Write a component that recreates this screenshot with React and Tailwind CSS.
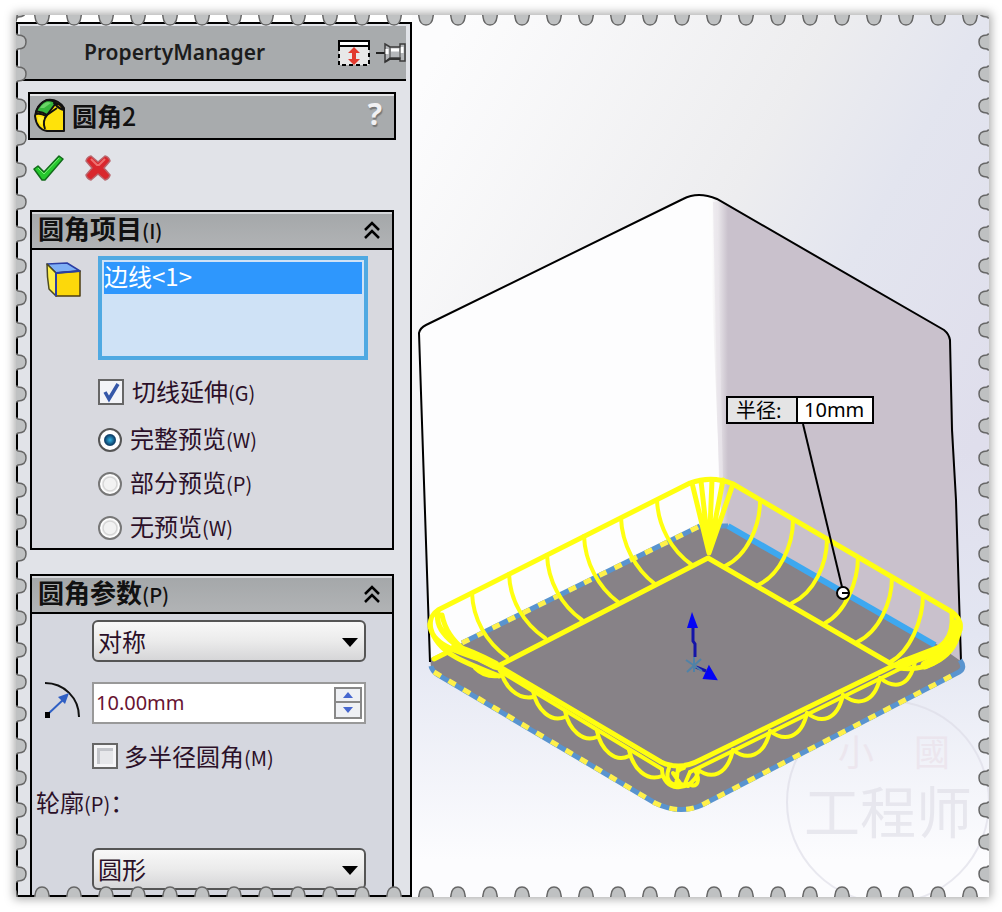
import React, { useState } from "react";

const FilletIcon = () => (
  <svg className="w-8 h-9 shrink-0" viewBox="0 0 32 36" strokeLinejoin="round">
    <path d="M1 18C2 11 6 5 13 2C20 1 26 4 30 10V33H13C7 32 2 27 1 18Z" fill="#ffe20a" stroke="#111" strokeWidth="2" />
    <path d="M2 14C4 8 8 4 13 2C17 2 20 3 22 5L13 17C9 14 6 13 2 14Z" fill="#35b63b" stroke="#111" strokeWidth="2" />
    <path d="M6 10Q9 5 14 4L17 5L10 10Z" fill="#6bd468" />
    <path d="M20 5Q26 5 30 12Q25 11 20 5Z" fill="#ffc81c" stroke="#111" strokeWidth="2" />
    <path d="M13 17L23 10M13 17Q8 23 11 31M2 16Q7 15 12 18" fill="none" stroke="#111" strokeWidth="2" />
    <path d="M4 19Q8 18 10 20Q8 24 8 27Q4 24 4 19Z" fill="#fff03a" />
  </svg>
);

const CubeIcon = () => (
  <svg className="w-9 h-9" viewBox="0 0 36 36" strokeLinejoin="round" strokeWidth="1.5">
    <path d="M1 2L21 1L34 9L10 11Z" fill="#7fb0f5" stroke="#2b3fa5" />
    <path d="M1 2L10 11V34L3 27Q1 15 1 2Z" fill="#fff04a" stroke="#4d4a20" />
    <path d="M10 11L34 9V34H10Z" fill="#fcd80b" stroke="#4b3d12" />
    <path d="M10 34V11L34 9" fill="none" stroke="#2b3fa5" strokeWidth="2" />
  </svg>
);

const RadiusIcon = () => (
  <svg className="w-9 h-9" viewBox="0 0 36 36" fill="none">
    <path d="M1 1C20 1 35 16 35 35" stroke="#111" strokeWidth="2" />
    <path d="M4 32L20 17" stroke="#2f5fc4" strokeWidth="2" />
    <path d="M25 11L21 22L14 15Z" fill="#2f5fc4" />
    <path d="M1 30H6V36H1Z" fill="#000" />
  </svg>
);

const SectionHeader = ({ title, hotkey }) => (
  <button
    type="button"
    className="flex w-full h-[38px] items-center justify-between border-b-2 border-black bg-gradient-to-b from-[#a4a7a9] to-[#b1b3b5] pl-1.5 pr-3 text-left shadow-[inset_0_2px_0_#d5d7da]"
  >
    <span className="pb-1 text-[26px] leading-8 font-bold text-[#111]">
      {title}
      <span className="text-xl font-medium">({hotkey})</span>
    </span>
    <svg className="w-4 h-5" viewBox="0 0 16 20" fill="none" stroke="#000" strokeWidth="2.5">
      <path d="M1 10L8 3L15 10M1 18L8 11L15 18" />
    </svg>
  </button>
);

const RadioRow = ({ label, hotkey, checked, onChange }) => (
  <label className="mt-3 flex h-8 items-center gap-2 text-2xl text-[#2b1028]">
    <input
      type="radio"
      name="preview"
      checked={checked}
      onChange={onChange}
      className="appearance-none w-6 h-6 rounded-full border-2 border-[#777] bg-[radial-gradient(circle,#f2f2f2_40%,#d2d2d2_48%,#fff_62%)] checked:border-[#555] checked:bg-[radial-gradient(circle,#35b5e5_0%,#0c3c66_38%,#fff_46%)]"
    />
    <span className="pb-1">
      {label}
      <span className="text-xl">({hotkey})</span>
    </span>
  </label>
);

const DropDown = ({ name, options }) => (
  <div className="relative ml-[60px] mr-[26px]">
    <select
      aria-label={name}
      className="block w-full h-[42px] appearance-none rounded-md border-2 border-[#555] bg-gradient-to-b from-[#f8f8f8] via-[#ebebeb] to-[#d6d6d8] pl-1 text-2xl text-[#2b1028]"
    >
      {options.map((option) => (
        <option key={option}>{option}</option>
      ))}
    </select>
    <svg className="pointer-events-none absolute right-2 top-4 w-4 h-3" viewBox="0 0 16 12">
      <path d="M0 2H16L8 11Z" fill="#000" />
    </svg>
  </div>
);

const PropertyPanel = () => {
  const [preview, setPreview] = useState("full");

  return (
    <aside className="mt-[7px] w-[396px] shrink-0 overflow-hidden border-2 border-black bg-[#e1e3e8]">
      <header className="mt-0.5 ml-0.5 mr-1 flex h-[55px] items-center border-b-2 border-black bg-[#a8abad] pl-16">
        <h1 className="flex-1 font-['Noto_Sans'] text-[21px] font-semibold text-[#1c1c1c]">
          PropertyManager
        </h1>
        <button type="button" aria-label="Expand" className="mr-1.5">
          <svg className="w-8 h-7" viewBox="0 0 32 28">
            <path d="M1 8V26H31V8" fill="#e8e8e8" stroke="#000" strokeWidth="2" strokeDasharray="4 3" />
            <path d="M1 2H31V7H1Z" fill="#fff" stroke="#000" strokeWidth="2" />
            <path d="M16 10V24" stroke="#e23a2e" strokeWidth="4" />
            <path d="M10 14L16 8L22 14ZM10 20L16 26L22 20Z" fill="#e23a2e" />
          </svg>
        </button>
        <button type="button" aria-label="Pin">
          <svg className="w-[30px] h-6" viewBox="0 0 30 24">
            <path d="M0 12H9" stroke="#222" strokeWidth="2" />
            <path d="M9 3L14 6H24V3H29V20H24V17H14L9 21Z" fill="#b5b7ba" stroke="#3c3c3c" strokeWidth="1.5" />
            <path d="M15 9H23M11 8V13M26 6V12" stroke="#fff" strokeWidth="3" />
            <path d="M14 6V18M24 6V18" stroke="#444" />
            <path d="M9 21L14 18H24" fill="none" stroke="#333" strokeWidth="2" />
          </svg>
        </button>
      </header>

      <div className="mt-[11px] ml-2.5 mr-3.5 flex h-12 items-center border-2 border-black bg-[#a8abad] px-1 shadow-[inset_0_2px_0_#e5e6e8]">
        <FilletIcon />
        <h2 className="ml-1.5 flex-1 text-[25px] font-bold text-[#111]">
          圆角<span className="font-medium">2</span>
        </h2>
        <button
          type="button"
          aria-label="Help"
          className="mr-2 pb-1 font-['Noto_Sans'] text-[30px] leading-8 font-bold text-[#f1f1f3] [text-shadow:1px_2px_1px_#777]"
        >
          ?
        </button>
      </div>

      <div className="ml-3.5 mt-2.5 flex h-[60px] items-start gap-5">
        <button type="button" aria-label="OK" className="mt-1">
          <svg className="w-8 h-7" viewBox="0 0 32 28">
            <path d="M2 15L6 12L12 18L27 2L31 5L13 26L10 26Z" fill="#25c92d" stroke="#126b1b" strokeWidth="1.5" strokeLinejoin="round" />
            <path d="M6 14L12 20L27 4" fill="none" stroke="#79ec74" strokeWidth="1" />
          </svg>
        </button>
        <button type="button" aria-label="Cancel" className="mt-1">
          <svg className="w-7 h-7" viewBox="0 0 28 28">
            <path d="M7 2L14 8L21 2Q25 3 26 7L20 14L26 21Q25 25 21 26L14 20L7 26Q3 25 2 21L8 14L2 7Q3 3 7 2Z" fill="#d9272d" stroke="#b9656c" strokeWidth="1.5" strokeLinejoin="round" />
            <path d="M7 5L13 11H15L21 5" fill="none" stroke="#ef6f6f" strokeWidth="2" />
          </svg>
        </button>
      </div>

      <section className="ml-3 mr-4 border-2 border-black bg-[#d8d9df] pb-1">
        <SectionHeader title="圆角项目" hotkey="I" />
        <div className="flex pl-3.5 pt-1.5">
          <div className="mt-1.5 w-[52px]">
            <CubeIcon />
          </div>
          <ul className="mr-6 h-[104px] flex-1 border-4 border-[#4fa9e2] bg-[#cfe2f6] p-0.5">
            <li className="h-8 bg-[#2e97fd] text-2xl leading-7 text-white">边线&lt;1&gt;</li>
          </ul>
        </div>
        <div className="ml-[66px] mt-4">
          <label className="flex h-8 items-center gap-2 text-2xl text-[#2b1028]">
            <span className="relative flex w-6.5 h-6.5">
              <input
                type="checkbox"
                defaultChecked
                className="peer w-full h-full appearance-none border-2 border-[#666] bg-[#f3f4f8]"
              />
              <svg className="pointer-events-none absolute inset-0 hidden h-full w-full peer-checked:block" viewBox="0 0 26 26">
                <path d="M7 13L11 20L20 5" fill="none" stroke="#3557a8" strokeWidth="3.5" />
              </svg>
            </span>
            <span className="pb-0.5">
              切线延伸<span className="text-xl">(G)</span>
            </span>
          </label>
          <div className="pt-1">
            <RadioRow label="完整预览" hotkey="W" checked={preview === "full"} onChange={() => setPreview("full")} />
            <RadioRow label="部分预览" hotkey="P" checked={preview === "partial"} onChange={() => setPreview("partial")} />
            <RadioRow label="无预览" hotkey="W" checked={preview === "none"} onChange={() => setPreview("none")} />
          </div>
        </div>
      </section>

      <section className="ml-3 mr-4 mt-6 border-2 border-black bg-[#d5d7df] pb-8">
        <SectionHeader title="圆角参数" hotkey="P" />
        <div className="pt-1.5">
          <DropDown name="对称" options={["对称", "非对称"]} />
        </div>
        <div className="mt-5 mr-[26px] flex">
          <div className="w-[60px] shrink-0 pl-3">
            <RadiusIcon />
          </div>
          <div className="flex h-[42px] min-w-0 flex-1 items-center border-2 border-[#999] bg-white pr-0.5">
            <input
              aria-label="半径"
              defaultValue="10.00mm"
              className="min-w-0 flex-1 bg-transparent pl-0.5 font-['Noto_Sans'] text-xl text-[#681432] outline-none"
            />
            <div className="flex w-7 shrink-0 flex-col border-2 border-[#888] bg-[#eef0f4]">
              <button type="button" aria-label="增大" className="flex h-3.5 items-center justify-center border-b-2 border-[#888]">
                <svg className="w-3 h-2" viewBox="0 0 12 8">
                  <path d="M6 1L11 7H1Z" fill="#4667cf" />
                </svg>
              </button>
              <button type="button" aria-label="减小" className="flex h-3.5 items-center justify-center">
                <svg className="w-3 h-2" viewBox="0 0 12 8">
                  <path d="M6 7L11 1H1Z" fill="#4667cf" />
                </svg>
              </button>
            </div>
          </div>
        </div>
        <label className="ml-[60px] mt-4 flex h-8 items-center gap-1.5 text-2xl text-[#2b1028]">
          <input
            type="checkbox"
            className="w-6.5 h-6.5 appearance-none border-2 border-[#666] bg-[#e6e7ea] shadow-[inset_0_0_0_3px_#f5f5f7,inset_3px_3px_0_3px_#c3c5ca] checked:bg-[#3557a8]"
          />
          <span>
            多半径圆角<span className="text-xl">(M)</span>
          </span>
        </label>
        <p className="ml-1 mt-3.5 mb-7.5 text-2xl leading-8 text-[#2b1028]">
          轮廓<span className="text-xl">(P)</span>：
        </p>
        <DropDown name="轮廓" options={["圆形", "圆锥"]} />
      </section>
    </aside>
  );
};

// Fillet preview ribs: [top of rib, foot of rib]
const leftRibs = [
  [472, 593, 507, 657],
  [509, 574, 545, 638],
  [547, 555, 582, 620],
  [584, 536, 618, 602],
  [621, 518, 655, 584],
  [657, 500, 692, 565],
];

const rightRibs = [
  [760, 501, 725, 566],
  [793, 520, 758, 585],
  [827, 539, 792, 603],
  [858, 557, 825, 623],
  [892, 577, 857, 642],
  [923, 595, 890, 662],
];

const leftScallops = [[500, 671], [533, 694], [565, 714], [597, 734], [629, 753], [662, 773]];
const rightScallops = [[697, 769], [733, 750], [770, 731], [807, 713], [843, 695], [880, 678], [915, 662]];

const Model = () => (
  <svg className="block h-full w-full" viewBox="412 15 577 882" preserveAspectRatio="xMinYMin slice" fill="none">
    <defs>
      <linearGradient id="sky" x1="412" y1="100" x2="989" y2="420" gradientUnits="userSpaceOnUse">
        <stop offset="0" stopColor="#fcfcfd" />
        <stop offset="0.5" stopColor="#ededef" />
        <stop offset="0.7" stopColor="#e3e5ef" />
        <stop offset="1" stopColor="#dfdeec" />
      </linearGradient>
      <linearGradient id="floor" x1="0" y1="450" x2="0" y2="860" gradientUnits="userSpaceOnUse">
        <stop offset="0" stopColor="#e3e6f2" stopOpacity="0" />
        <stop offset="0.45" stopColor="#e3e6f2" />
        <stop offset="1" stopColor="#fcfcfe" />
      </linearGradient>
      <linearGradient id="side" x1="712" y1="0" x2="728" y2="0" gradientUnits="userSpaceOnUse">
        <stop offset="0" stopColor="#fdfdfd" />
        <stop offset="1" stopColor="#c9c1cc" />
      </linearGradient>
    </defs>
    <rect x="412" y="15" width="577" height="882" fill="url(#sky)" />
    <rect x="412" y="450" width="577" height="447" fill="url(#floor)" />

    <g opacity="0.6" fontFamily="Liberation Serif, Noto Sans CJK SC, serif">
      <circle cx="888" cy="802" r="101" stroke="#dcdbe6" strokeWidth="2" />
      <text x="838" y="766" fontSize="36" fill="#eadfe8">小</text>
      <text x="914" y="766" fontSize="36" fill="#eadfe8">國</text>
      <text x="804" y="833" fontSize="56" fill="#dedde6">工程师</text>
    </g>

    <path d="M419 333Q420 328 426 325L683 199Q698 191 714 197L727 560L431 664Z" fill="#fdfdfe" />
    <path d="M708 196Q714 196 719 200L944 330Q949 333 950 340L962 662L722 540Z" fill="url(#side)" />
    <path d="M715 202L721 480" stroke="#e9e6eb" strokeWidth="4" opacity="0.7" />

    <path d="M431 658L462 643L700 525Q712 521 730 526L935 643L962 662Q967 667 960 671L700 806Q680 814 658 804L436 674Q429 669 431 658Z" fill="#878287" />

    <path d="M430 662L419 333Q420 328 426 325L683 199Q698 191 717 199L944 330Q949 334 950 340L952 430L956 500L961 662" stroke="#000" strokeWidth="2" />

    <path d="M462 643L700 526M431 666Q432 671 438 675L655 803Q680 815 702 805L959 672Q966 668 960 660M700 526H728" stroke="#5994cf" strokeWidth="5" />
    <path d="M462 643L700 526M434 672L655 803Q680 815 702 805L959 672" stroke="#fff04a" strokeWidth="5" strokeDasharray="8 9" />
    <path d="M728 526L935 645" stroke="#3ea8f0" strokeWidth="6" />

    <g stroke="#ffff10" strokeWidth="5" strokeLinejoin="round" strokeLinecap="round">
      <path d="M430 626Q430 615 438 610L690 483Q712 475 733 484L952 612Q962 619 960 630" />
      <path d="M500 665L708 558L893 665" />
      <path d="M495 664L661 762Q680 771 700 760L905 660" />
      <path d="M690 772L920 659" strokeWidth="4" />
      <path d="M430 624C430 643 452 651 495 664M438 612C433 634 463 653 500 667M430 624C434 655 471 664 499 676M442 615C448 646 477 660 505 671" />
      <path d="M455 648C470 652 484 659 495 665" strokeWidth="9" />
      <path d="M434 659L446 653" />
      <path d="M960 624C961 645 944 654 896 666M952 614C954 637 945 650 912 658M959 630C956 655 930 672 899 668M947 644L900 662" />
      <path d="M956 624C957 643 947 655 925 665" strokeWidth="9" />
      <path d="M692 483L709 553L733 484M701 481L709 553L723 480M712 480L709 553" />
      {leftRibs.map(([x1, y1, x2, y2]) => (
        <path key={x1} d={`M${x1} ${y1}C${x1 + 1} ${y1 + 26} ${x1 + 14} ${y2 - 15} ${x2} ${y2}`} strokeWidth="4" />
      ))}
      {rightRibs.map(([x1, y1, x2, y2]) => (
        <path key={x1} d={`M${x1} ${y1}C${x1} ${y1 + 25} ${x1 - 13} ${y2 - 10} ${x2} ${y2}`} strokeWidth="4" />
      ))}
      <path d="M475 668Q485 678 499 676" strokeWidth="4" />
      <path d="M500 671L662 769" strokeWidth="4" />
      {leftScallops.slice(0, -1).map(([x, y], i) => {
        const [nx, ny] = leftScallops[i + 1];
        return <path key={x} d={`M${x} ${y - 3}C${x + 4} ${y + 16} ${x + 18} ${y + 29} ${nx} ${ny + 3}`} strokeWidth="4" />;
      })}
      {rightScallops.slice(0, -1).map(([x, y], i) => {
        const [nx, ny] = rightScallops[i + 1];
        return <path key={x} d={`M${x} ${y}C${x + 14} ${y + 11} ${nx - 6} ${ny + 26} ${nx} ${ny}`} strokeWidth="4" />;
      })}
      <path d="M662 770C663 791 689 794 698 773M669 768C663 783 676 789 688 784M684 768C672 770 675 785 688 786M695 770C701 781 697 787 691 785M673 773L682 786M678 768L676 786M690 772L684 786" strokeWidth="4" />
    </g>

    <path d="M693 625V641L695 644V657" stroke="#1414a8" strokeWidth="3" />
    <path d="M692 612L698 628H687Z" fill="#0505f5" />
    <path d="M696 667L706 671" stroke="#1414a8" strokeWidth="3" />
    <path d="M709 667L716 679L704 678Z" fill="#0505f5" stroke="#0505f5" strokeWidth="2" />
    <path d="M686 660L702 671M701 659L687 672M694 657V672" stroke="#4f82a8" strokeWidth="2" />

    <path d="M803 424L842 587" stroke="#000" strokeWidth="2" />
    <circle cx="843" cy="593" r="6" fill="#fff" stroke="#000" strokeWidth="2" />
    <path d="M842 593H848" stroke="#000" strokeWidth="2" />
  </svg>
);

// Perforated stamp edge, one hole every 32px
const edges = {
  left: {
    place: "left-0 top-0 h-full w-3",
    hole: "M0 8Q2 8 2 9Q10 9 10 16Q10 23 2 23Q2 24 0 24",
  },
  right: {
    place: "right-0 top-0 h-full w-3",
    hole: "M12 8Q10 8 10 9Q2 9 2 16Q2 23 10 23Q10 24 12 24",
  },
  top: {
    place: "left-0 top-0 h-3 w-full",
    hole: "M8 0Q9 0 9 2Q10 10 16 10Q22 10 23 2Q23 0 24 0",
  },
  bottom: {
    place: "left-0 bottom-0 h-3 w-full",
    hole: "M8 12Q9 12 9 10Q10 2 16 2Q22 2 23 10Q23 12 24 12",
  },
};

const Perforation = ({ side }) => {
  const vertical = side === "left" || side === "right";
  const id = `perforation-${side}`;

  return (
    <svg className={`pointer-events-none absolute ${edges[side].place}`} aria-hidden="true">
      <defs>
        <pattern
          id={id}
          x={vertical ? 0 : 10}
          y={vertical ? 11 : 0}
          width={vertical ? 12 : 32}
          height={vertical ? 32 : 12}
          patternUnits="userSpaceOnUse"
        >
          <path d={edges[side].hole} fill="#bfc1c2" stroke="#666" strokeWidth="1.5" />
        </pattern>
      </defs>
      <rect width="100%" height="100%" fill={`url(#${id})`} />
    </svg>
  );
};

export default function App() {
  return (
    <main className="h-screen min-h-96 bg-white pt-[15px] pr-[13px] pb-[15px] pl-4 font-['Noto_Sans_CJK_SC',sans-serif]">
      <div className="relative flex h-full bg-white shadow-[0_0_9px_2px_#aaa]">
        <PropertyPanel />
        <section className="relative min-w-0 flex-1 overflow-hidden">
          <Model />
          {/* callout pinned to the selected edge */}
          <label className="absolute left-[314px] top-[381px] flex h-7 w-[148px] border-2 border-black bg-[#e4e4e5] text-xl leading-6 text-black">
            <span className="w-[68px] pl-2">半径:</span>
            <input
              defaultValue="10mm"
              className="min-w-0 flex-1 border-l-2 border-black bg-white pl-1.5 font-['Noto_Sans']"
            />
          </label>
        </section>
        <Perforation side="left" />
        <Perforation side="right" />
        <Perforation side="top" />
        <Perforation side="bottom" />
      </div>
    </main>
  );
}
